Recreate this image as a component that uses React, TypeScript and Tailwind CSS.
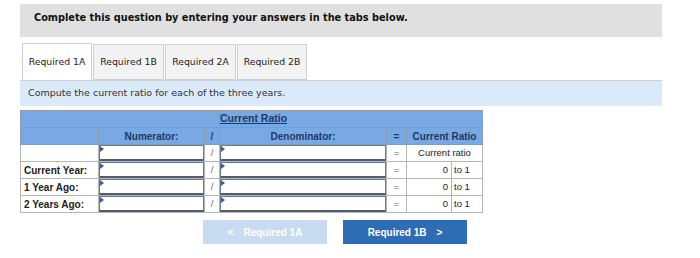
import React from "react";

function Inp() {
  return (
    <div className="relative h-[16px] border border-[#6b7890] border-b-2 border-b-[#4f5d73] bg-white">
      <div className="absolute left-0 top-0 w-0 h-0 border-t-[3px] border-b-[3px] border-l-[4px] border-t-transparent border-b-transparent border-l-[#3a5f9a]" />
    </div>
  );
}

export default function App() {
  const rows = ["", "Current Year:", "1 Year Ago:", "2 Years Ago:"];
  const td = "border border-[#b5b5b5]";
  return (
    <div className="w-[700px] h-[258px] bg-white relative" style={{ fontFamily: '"DejaVu Sans", Verdana, sans-serif' }}>
      <div className="pt-[4px] pl-[20px]">
        <div className="w-[642px] h-[33px] bg-[#e0e0e0] pl-[14px] pt-[7px] text-[9.75px] font-bold text-[#111]">
          Complete this question by entering your answers in the tabs below.
        </div>
        <div className="mt-[6px] flex items-end gap-[1px] pl-[2px]">
          <div className="h-[37px] w-[70px] border border-[#cfcfcf] border-b-0 bg-white flex items-center justify-center text-[9.3px] text-[#222]">Required 1A</div>
          <div className="h-[36px] w-[71px] border border-[#cfcfcf] bg-[#f3f3f3] flex items-center justify-center text-[9.3px] text-[#222]">Required 1B</div>
          <div className="h-[36px] w-[71px] border border-[#cfcfcf] bg-[#f3f3f3] flex items-center justify-center text-[9.3px] text-[#222]">Required 2A</div>
          <div className="h-[36px] w-[70px] border border-[#cfcfcf] bg-[#f3f3f3] flex items-center justify-center text-[9.3px] text-[#222]">Required 2B</div>
        </div>
        <div className="w-[642px] h-[26px] bg-[#daeaf8] border-t border-t-[#c6d0da] pl-[8px] flex items-center text-[9.5px] text-[#333]">
          Compute the current ratio for each of the three years.
        </div>
        <table className="mt-[4px] border-collapse text-[9.5px] text-[#222]" style={{ fontFamily: '"Liberation Sans", Arial, sans-serif' }}>
          <colgroup>
            <col style={{ width: 78 }} />
            <col style={{ width: 106 }} />
            <col style={{ width: 15 }} />
            <col style={{ width: 167 }} />
            <col style={{ width: 20 }} />
            <col style={{ width: 45 }} />
            <col style={{ width: 31 }} />
          </colgroup>
          <tbody>
            <tr className="h-[17px] bg-[#78a9e4]">
              <td className="border border-[#8a9bb0]" colSpan={3}></td>
              <td className="border-y border-[#8a9bb0] text-left font-bold text-[#1f3864] underline text-[10.5px]" colSpan={4}>Current Ratio</td>
            </tr>
            <tr className="h-[17px] bg-[#78a9e4] font-bold text-[#1f3864] text-[10px]">
              <td className="border border-[#8a9bb0]"></td>
              <td className="border border-[#8a9bb0] text-center">Numerator:</td>
              <td className="border border-[#8a9bb0] text-center">/</td>
              <td className="border border-[#8a9bb0] text-center">Denominator:</td>
              <td className="border border-[#8a9bb0] text-center">=</td>
              <td className="border border-[#8a9bb0] text-center" colSpan={2}>Current Ratio</td>
            </tr>
            {rows.map((r, i) => (
              <tr key={i} className="h-[17px] bg-white">
                <td className={`${td} font-bold pl-[3px] text-[10px]`}>{r}</td>
                <td className={`${td} p-0`}><Inp /></td>
                <td className={`${td} text-center text-[#666]`}>/</td>
                <td className={`${td} p-0`}><Inp /></td>
                <td className={`${td} text-center text-[#666]`}>=</td>
                {i === 0 ? (
                  <td className={`${td} text-center`} colSpan={2}>Current ratio</td>
                ) : (
                  <>
                    <td className={`${td} text-right pr-[3px]`}>0</td>
                    <td className={`${td} pl-[2px]`}>to 1</td>
                  </>
                )}
              </tr>
            ))}
          </tbody>
        </table>
        <div className="mt-[7px] flex gap-[16px] pl-[183px]" style={{ fontFamily: '"Liberation Sans", Arial, sans-serif' }}>
          <div className="w-[124px] h-[24px] bg-[#c9dbf0] text-white font-bold text-[10px] flex items-center justify-center gap-[10px]">
            <span>&lt;</span><span>Required 1A</span>
          </div>
          <div className="w-[124px] h-[24px] bg-[#2e6cb4] text-white font-bold text-[10px] flex items-center justify-center gap-[10px]">
            <span>Required 1B</span><span>&gt;</span>
          </div>
        </div>
      </div>
    </div>
  );
}
